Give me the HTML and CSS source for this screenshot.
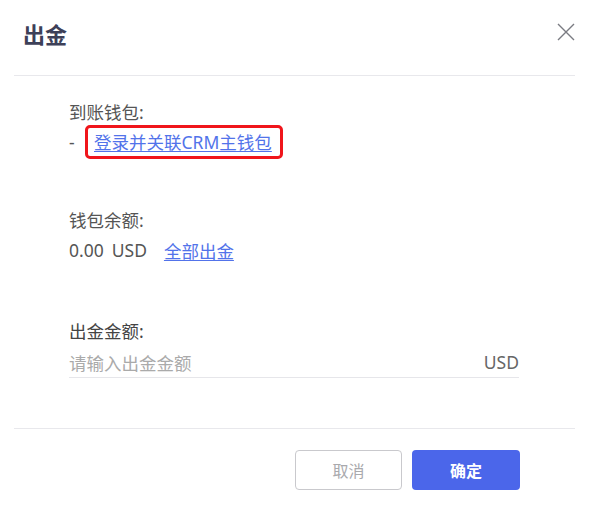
FILE: index.html
```html
<!DOCTYPE html>
<html lang="zh">
<head>
<meta charset="utf-8">
<link rel="stylesheet" href="styles.css">
</head>
<body>
<div class="modal">
  <div class="header">
    <div class="title">出金</div>
    <svg class="close" width="18" height="18" viewBox="0 0 18 18"><path d="M1 1L17 17M17 1L1 17" stroke="#7a7b82" stroke-width="1.4" fill="none"/></svg>
  </div>
  <div class="body">
    <div class="field f1">
      <div class="label">到账钱包:</div>
      <div class="row">
        <span class="dash">-</span>
        <span class="redbox"><a class="link">登录并关联CRM主钱包</a></span>
      </div>
    </div>
    <div class="field f2">
      <div class="label">钱包余额:</div>
      <div class="row value"><span>0.00</span><span class="cur">USD</span><a class="link all">全部出金</a></div>
    </div>
    <div class="field f3">
      <div class="label dark">出金金额:</div>
      <div class="input"><span class="ph">请输入出金金额</span><span class="unit">USD</span></div>
    </div>
  </div>
  <div class="footer">
    <button class="btn cancel">取消</button>
    <button class="btn ok">确定</button>
  </div>
</div>
</body>
</html>
```
FILE: styles.css
```css
html, body { margin: 0; padding: 0; background: #fff; }
body { font-family: "Noto Sans", "Noto Sans CJK SC", sans-serif; color: #555; }
.modal { width: 594px; height: 507px; }
.header {
  height: 75px;
  margin: 0 19px 0 14px;
  border-bottom: 1px solid #e8e8ec;
  display: flex;
  align-items: flex-start;
  justify-content: space-between;
}
.title { font-family: "Noto Sans CJK SC", sans-serif; font-size: 22px; font-weight: 700; color: #3d4058; line-height: 28px; margin: 19px 0 0 9px; }
.close { margin: 23px 0 0 0; }
.body { padding: 24px 0 0 69px; }
.label { font-size: 17.5px; line-height: 24px; color: #555; }
.label.dark { color: #444; }
.row { display: flex; align-items: center; font-size: 17.5px; }
.f1 .row { height: 35px; }
.dash { width: 15px; color: #555; }
.redbox { border: 3px solid #f0151b; border-radius: 5px; padding: 0 8px 0 6px; height: 28px; display: flex; align-items: center; margin-left: 1px; }
.link { color: #5273ea; text-decoration: underline; text-underline-offset: 2px; font-size: 17.5px; }
.f2 { margin-top: 49px; }
.value { height: 30px; margin-top: 3px; color: #555; }
.cur { margin-left: 8px; }
.all { margin-left: 17px; }
.f3 { margin-top: 54px; }
.input { width: 450px; height: 30px; margin-top: 4px; border-bottom: 1px solid #e6e6ea; display: flex; align-items: center; justify-content: space-between; font-size: 17.5px; }
.ph { color: #aaa; }
.unit { color: #666; }
.footer { margin: 50px 19px 0 14px; border-top: 1px solid #e8e8ec; padding: 21px 55px 0 0; display: flex; justify-content: flex-end; gap: 10px; }
.btn { width: 108px; height: 40px; border-radius: 4px; font-family: "Noto Sans CJK SC", sans-serif; font-size: 16px; cursor: pointer; }
.cancel { background: #fff; border: 1px solid #c9c9cd; color: #a9a9ad; width: 107px; }
.ok { background: #4b66ea; border: none; color: #fff; font-weight: 700; }
```
